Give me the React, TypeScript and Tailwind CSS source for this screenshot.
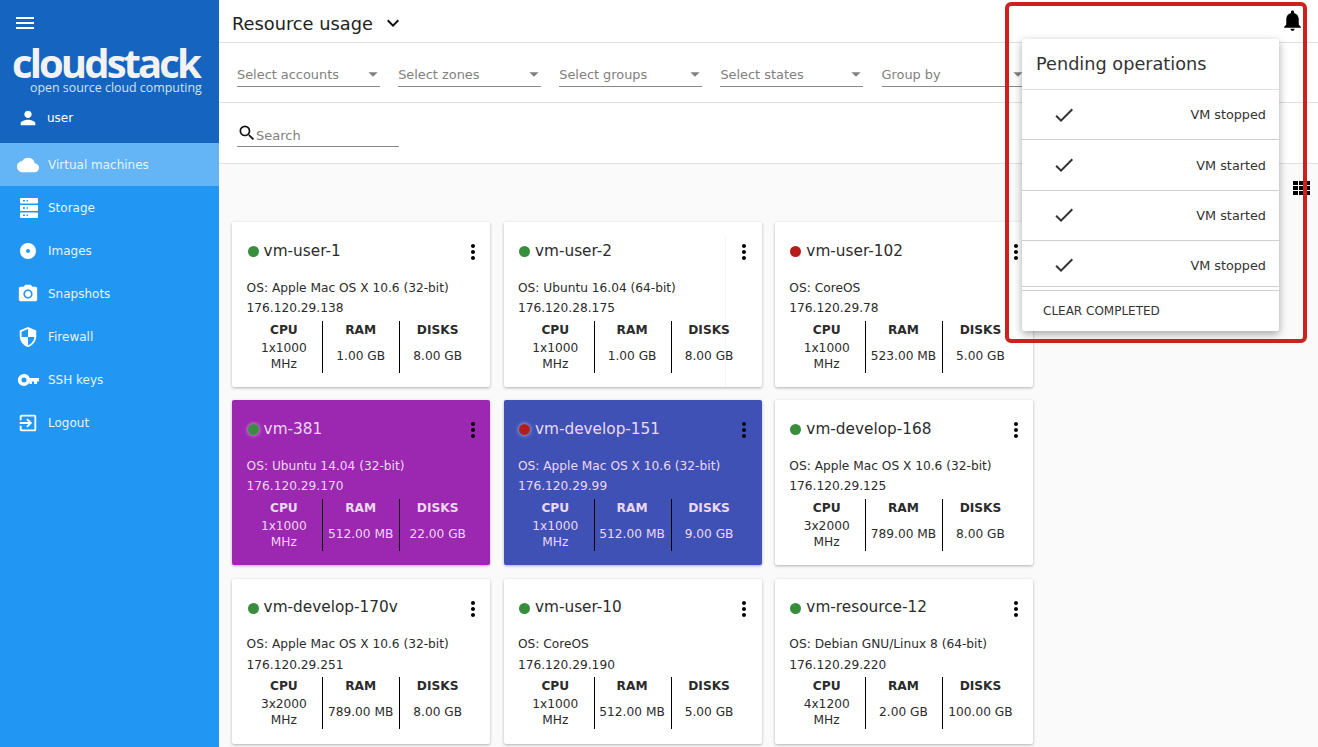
import type { ReactNode } from "react";
import {
  MdArrowDropDown,
  MdCameraAlt,
  MdCheck,
  MdCloud,
  MdExitToApp,
  MdKeyboardArrowDown,
  MdMenu,
  MdMoreVert,
  MdNotifications,
  MdPerson,
  MdSearch,
  MdSecurity,
} from "react-icons/md";

function ServerIcon() {
  return (
    <svg width="18" height="20" viewBox="0 0 18 20" fill="white">
      <path
        fillRule="evenodd"
        d="M1 0h16a1 1 0 0 1 1 1v3.500a1 1 0 0 1-1 1H1a1 1 0 0 1-1-1V1a1 1 0 0 1 1-1zm2 2v1.500h2V2H3zm3.500 0v1.500h1.500V2H6.500zM1 7h16a1 1 0 0 1 1 1v4a1 1 0 0 1-1 1H1a1 1 0 0 1-1-1V8a1 1 0 0 1 1-1zm2 2.200v1.600h2V9.200H3zm3.500 0v1.600h1.500V9.200H6.500zM1 14.500h16a1 1 0 0 1 1 1V19a1 1 0 0 1-1 1H1a1 1 0 0 1-1-1v-3.500a1 1 0 0 1 1-1zm2 2v1.500h2v-1.500H3zm3.500 0v1.500h1.500v-1.500H6.500z"
      />
    </svg>
  );
}

function DiscIcon() {
  return (
    <svg width="16" height="16" viewBox="0 0 16 16" fill="white" className="ml-[3px]">
      <path fillRule="evenodd" d="M8 0a8 8 0 1 1 0 16A8 8 0 0 1 8 0zm0 6a2 2 0 1 0 0 4 2 2 0 0 0 0-4z" />
    </svg>
  );
}

function KeyIcon() {
  return (
    <svg width="21" height="12" viewBox="0 0 21 12" fill="white" className="ml-[1px]">
      <path
        fillRule="evenodd"
        d="M6 0a6 6 0 0 1 5.700 4H21v3.500h-2V10h-3V7.500h-2V10h-2.500V8A6 6 0 1 1 6 0zm0 3.500a2.500 2.500 0 1 0 0 5 2.500 2.500 0 0 0 0-5z"
      />
    </svg>
  );
}

const navItems: { label: string; icon: ReactNode; active?: boolean }[] = [
  { label: "Virtual machines", icon: <MdCloud />, active: true },
  { label: "Storage", icon: <div className="ml-[3px]"><ServerIcon /></div> },
  { label: "Images", icon: <DiscIcon /> },
  { label: "Snapshots", icon: <MdCameraAlt /> },
  { label: "Firewall", icon: <MdSecurity /> },
  { label: "SSH keys", icon: <KeyIcon /> },
  { label: "Logout", icon: <MdExitToApp /> },
];

const filters = ["Select accounts", "Select zones", "Select groups", "Select states", "Group by"];

const operations = [
  { label: "VM stopped", row: "h-[50px]", text: "mt-[1px]", check: "" },
  { label: "VM started", row: "h-[51px]", text: "mt-[2px]", check: "" },
  { label: "VM started", row: "h-[50px]", text: "mt-[1px]", check: "-mt-[1px]" },
  { label: "VM stopped", row: "h-[46px] pt-[3px]", text: "mt-[2px]", check: "" },
];

interface Vm {
  name: string;
  on: boolean;
  os: string;
  ip: string;
  cpu: string;
  ram: string;
  disks: string;
  bg?: string;
  seam?: boolean;
}

const vms: Vm[] = [
  { name: "vm-user-1", on: true, os: "Apple Mac OS X 10.6 (32-bit)", ip: "176.120.29.138", cpu: "1x1000 MHz", ram: "1.00 GB", disks: "8.00 GB" },
  { name: "vm-user-2", on: true, os: "Ubuntu 16.04 (64-bit)", ip: "176.120.28.175", cpu: "1x1000 MHz", ram: "1.00 GB", disks: "8.00 GB", seam: true },
  { name: "vm-user-102", on: false, os: "CoreOS", ip: "176.120.29.78", cpu: "1x1000 MHz", ram: "523.00 MB", disks: "5.00 GB" },
  { name: "vm-381", on: true, os: "Ubuntu 14.04 (32-bit)", ip: "176.120.29.170", cpu: "1x1000 MHz", ram: "512.00 MB", disks: "22.00 GB", bg: "bg-[#9c27b0]" },
  { name: "vm-develop-151", on: false, os: "Apple Mac OS X 10.6 (32-bit)", ip: "176.120.29.99", cpu: "1x1000 MHz", ram: "512.00 MB", disks: "9.00 GB", bg: "bg-[#3f51b5]" },
  { name: "vm-develop-168", on: true, os: "Apple Mac OS X 10.6 (32-bit)", ip: "176.120.29.125", cpu: "3x2000 MHz", ram: "789.00 MB", disks: "8.00 GB" },
  { name: "vm-develop-170v", on: true, os: "Apple Mac OS X 10.6 (32-bit)", ip: "176.120.29.251", cpu: "3x2000 MHz", ram: "789.00 MB", disks: "8.00 GB" },
  { name: "vm-user-10", on: true, os: "CoreOS", ip: "176.120.29.190", cpu: "1x1000 MHz", ram: "512.00 MB", disks: "5.00 GB" },
  { name: "vm-resource-12", on: true, os: "Debian GNU/Linux 8 (64-bit)", ip: "176.120.29.220", cpu: "4x1200 MHz", ram: "2.00 GB", disks: "100.00 GB" },
];

function Sidebar() {
  return (
    <aside className="w-[219px] shrink-0 flex flex-col bg-[#2196f3] text-white">
      <div className="h-[143px] bg-[#1565c0] flex flex-col">
        <MdMenu className="mt-[11px] ml-[13px] text-[24px] shrink-0" />
        <div className="mt-[8px] ml-[12px] h-[38px] font-['Open_Sans',sans-serif] font-bold text-[40px] leading-[40px] tracking-[-2.9px] text-[#f2f2f2]">
          cloudstack
        </div>
        <div className="ml-[30px] h-[14px] font-['Open_Sans',sans-serif] text-[12.4px] leading-[14px] text-[#cfe3f7] whitespace-nowrap">
          open source cloud computing
        </div>
        <div className="flex items-center h-[30px] mt-[8px]">
          <MdPerson className="ml-[17px] text-[22px]" />
          <span className="ml-[8px] text-[12px]">user</span>
        </div>
      </div>
      {navItems.map((item) => (
        <div key={item.label} className={`flex items-center h-[43px] ${item.active ? "bg-[#64b5f6]" : ""}`}>
          <span className="w-[48px] pl-[17px] shrink-0 text-[22px]">{item.icon}</span>
          <span className="text-[12px] text-[#e8f3fd]">{item.label}</span>
        </div>
      ))}
    </aside>
  );
}

function VmCard({ vm }: { vm: Vm }) {
  const colored = !!vm.bg;
  const cpu = vm.cpu.split(" ");
  return (
    <div
      className={`relative h-[165px] rounded-[2px] pl-[14.4px] pr-[15px] flex flex-col shadow-[0_1px_3px_rgba(0,0,0,0.3)] text-[12.2px] ${
        vm.bg ?? "bg-white"
      } ${colored ? "text-[#ecd9f1]" : "text-[#2b2b2b]"}`}
    >
      {vm.seam && <div className="absolute right-[36px] top-[14px] bottom-0 w-px bg-black/[0.04]" />}
      <div className="flex items-center h-[20px] mt-[19px]">
        <span
          className={`w-[11px] h-[11px] rounded-full ml-[1px] mt-[1px] ${vm.on ? "bg-[#388e3c]" : "bg-[#b71c1c]"} ${
            colored ? "shadow-[0_0_4px_rgba(255,255,255,0.7)]" : ""
          }`}
        />
        <span className="ml-[5px] text-[15.3px] leading-[20px] -mt-[0.4px]">{vm.name}</span>
        <MdMoreVert className="ml-auto -mr-[9.6px] mt-[2px] text-[24px] text-black" />
      </div>
      <div className="mt-[16.8px] h-[20.2px] leading-[20px] whitespace-nowrap">OS: {vm.os}</div>
      <div className="h-[20px] leading-[20px]">{vm.ip}</div>
      <div className="grid grid-cols-[76.6px_77px_76px] h-[52px] mt-[2.8px]">
        {[
          { title: "CPU", lines: cpu },
          { title: "RAM", lines: [vm.ram] },
          { title: "DISKS", lines: [vm.disks] },
        ].map((col, i) => (
          <div key={col.title} className={`flex flex-col items-center pr-[1px] ${i < 2 ? "border-r border-black" : ""}`}>
            <div className="font-bold leading-[18px] h-[18px]">{col.title}</div>
            <div className="flex-1 flex flex-col justify-center leading-[16px] text-center whitespace-nowrap">
              {col.lines.map((l) => (
                <div key={l}>{l}</div>
              ))}
            </div>
          </div>
        ))}
      </div>
    </div>
  );
}

function PendingPopup() {
  return (
    <div className="absolute left-[1022px] top-[39px] w-[257px] h-[292px] bg-white rounded-[2px] shadow-[0_3px_8px_rgba(0,0,0,0.35)] text-[#333]">
      <div className="h-[51px] pl-[14px] flex items-center text-[17.7px] leading-[26px] border-b border-[#e0e0e0]">Pending operations</div>
      {operations.map((op, i) => (
        <div key={i} className={`${op.row} flex items-center pl-[30px] pr-[13px] border-b border-[#cfcfcf]`}>
          <MdCheck className={`text-[24px] text-[#333] ${op.check}`} />
          <span className={`ml-auto text-[12.8px] ${op.text}`}>{op.label}</span>
        </div>
      ))}
      <div className="mt-[3px] border-t border-[#d0d0d0] pl-[21px] h-[40px] flex items-center text-[12px]">CLEAR COMPLETED</div>
    </div>
  );
}

export default function App() {
  return (
    <div className="relative w-[1318px] h-[747px] overflow-hidden flex bg-[#fafafa] font-['DejaVu_Sans',sans-serif]">
      <Sidebar />
      <main className="flex-1 min-w-0 flex flex-col">
        <header className="h-[43px] bg-white border-b border-[#e0e0e0] flex items-center pl-[13px] pr-[13px]">
          <span className="text-[17.8px] text-[#222] mt-[6px]">Resource usage</span>
          <MdKeyboardArrowDown className="ml-[8px] mt-[4px] text-[24px] text-[#111]" />
          <MdNotifications className="ml-auto text-[25px] text-black -mt-[2px]" />
        </header>
        <div className="h-[60px] bg-white border-b border-[#e0e0e0] flex gap-[18.13px] pl-[18px] pt-[19px]">
          {filters.map((f) => (
            <div key={f} className="w-[143px] h-[25px] border-b border-[#8a8a8a] flex items-start text-[12.9px] text-[#808080]">
              <span className="leading-[25px]">{f}</span>
              <MdArrowDropDown className="ml-auto text-[22px] mt-[1px] -mr-[4px] text-[#808080]" />
            </div>
          ))}
        </div>
        <div className="h-[61px] bg-white border-b border-[#e0e0e0] pl-[18px] pt-[20px]">
          <div className="w-[162px] h-[24px] border-b border-[#8a8a8a] flex items-center">
            <MdSearch className="text-[20px] -mt-[4px] text-[#111]" />
            <span className="-ml-[1px] text-[13px] text-[#808080] mt-[3px]">Search</span>
          </div>
        </div>
        <div className="relative flex-1 pl-[13.2px] pt-[57.8px]">
          <svg
            width="17"
            height="14"
            viewBox="0 0 17 14"
            fill="black"
            className="absolute top-[17px] left-[1074px]"
          >
            <path d="M0 0h5v4H0zM6 0h5v4H6zM12 0h5v4h-5zM0 5h5v4H0zM6 5h5v4H6zM12 5h5v4h-5zM0 10h5v4H0zM6 10h5v4H6zM12 10h5v4h-5z" />
          </svg>
          <div className="grid grid-cols-[258px_258px_258px] gap-x-[13.4px] gap-y-[13.4px]">
            {vms.map((vm) => (
              <VmCard key={vm.name} vm={vm} />
            ))}
          </div>
        </div>
      </main>
      <PendingPopup />
      {/* 스크린샷에 그려진 빨간 강조 박스 */}
      <div className="absolute left-[1005px] top-[2px] w-[302px] h-[341px] border-[4px] border-[#cf2020] rounded-[6px] pointer-events-none" />
    </div>
  );
}
